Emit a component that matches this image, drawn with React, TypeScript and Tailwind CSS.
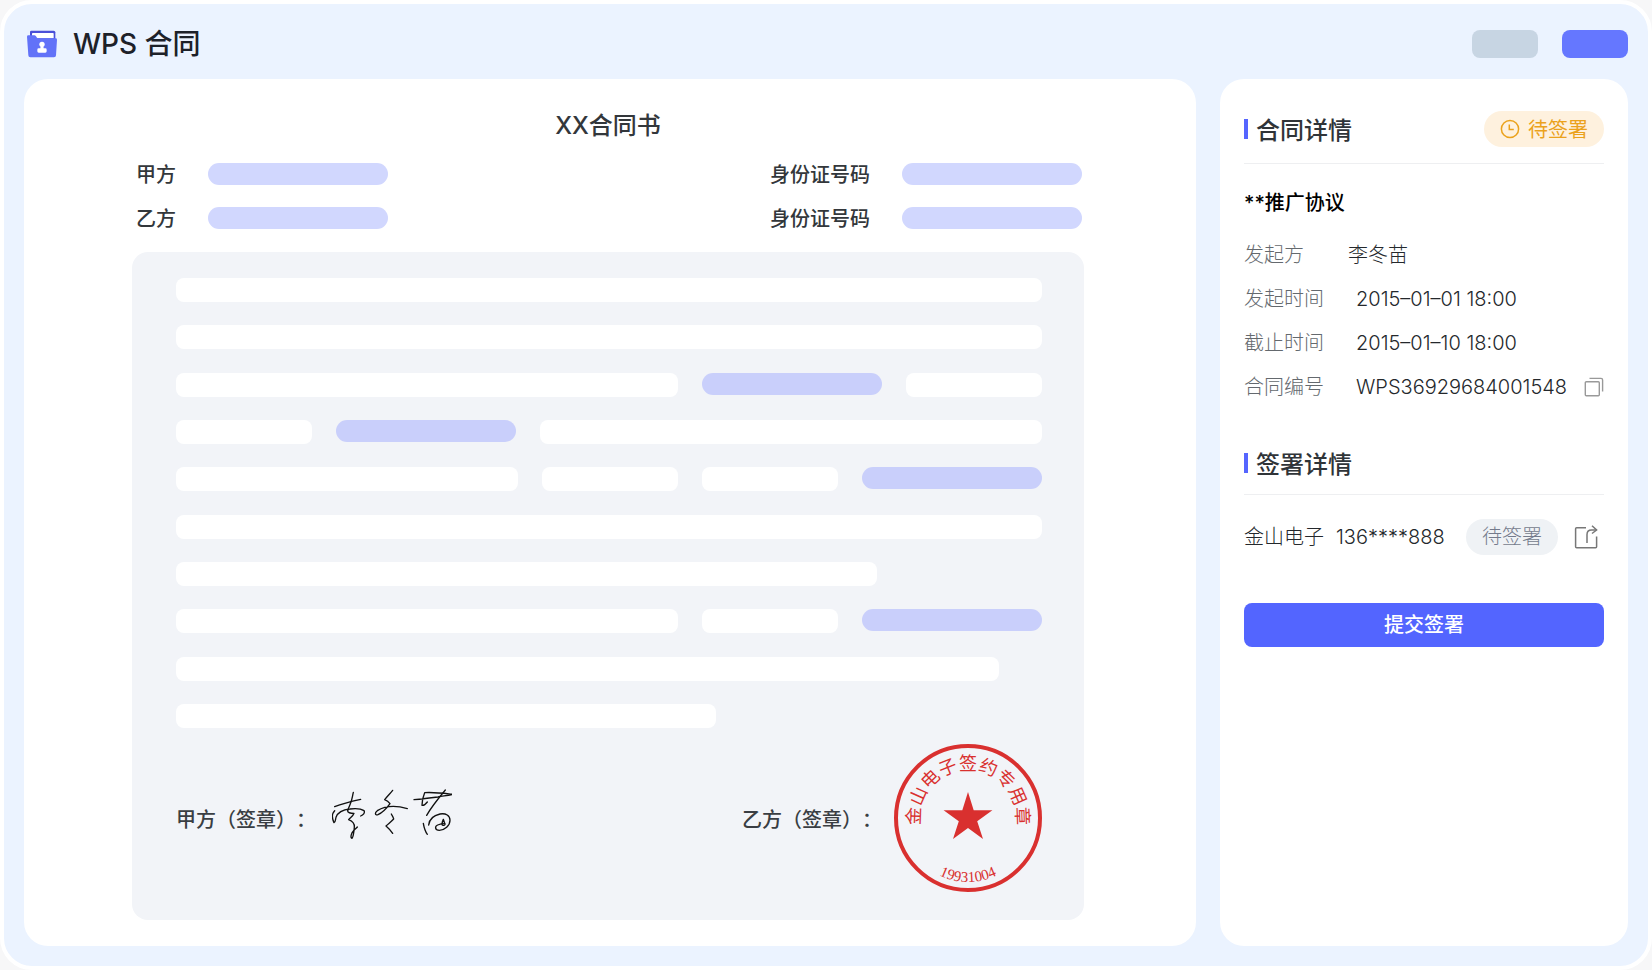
import clsx from "clsx";

interface Segment {
  kind: "text" | "field";
  // tailwind width / grow class
  size: string;
}

interface Detail {
  label: string;
  value: string;
  gap: string;
  copyable?: boolean;
}

const FIELD: Segment = { kind: "field", size: "w-[180px] shrink-0" };
const SHORT: Segment = { kind: "text", size: "w-[136px] shrink-0" };
const FILL: Segment = { kind: "text", size: "flex-1" };

const lines: Segment[][] = [
  [FILL],
  [FILL],
  [FILL, FIELD, SHORT],
  [SHORT, FIELD, FILL],
  [FILL, SHORT, SHORT, FIELD],
  [FILL],
  [{ kind: "text", size: "w-[81%]" }],
  [FILL, SHORT, FIELD],
  [{ kind: "text", size: "w-[95%]" }],
  [{ kind: "text", size: "w-[62.4%]" }],
];

const parties = ["甲方", "乙方"];

const details: Detail[] = [
  { label: "发起方", value: "李冬苗", gap: "gap-11" },
  { label: "发起时间", value: "2015–01–01 18:00", gap: "gap-8" },
  { label: "截止时间", value: "2015–01–10 18:00", gap: "gap-8" },
  {
    label: "合同编号",
    value: "WPS36929684001548",
    gap: "gap-8",
    copyable: true,
  },
];

const sealText = "金山电子签约专用章";

function FolderLogo() {
  return (
    <svg viewBox="81 85 90 90" className="size-[30px]" aria-hidden="true">
      <path d="M90 94q0-4 4-4h67q5 0 5 5v22H90z" fill="#4a50d8" />
      <path d="M96 99q0-2 2-2h61q2 0 2 2v14H96z" fill="#fff" />
      <path
        d="M81 108q0-4 4-4h18q3 0 5 3l3 4q2 2 4 2h52q4 0 4 4l-3 47q0 6-6 6H91q-6 0-6-6z"
        fill="#6272f8"
      />
      <circle cx="126" cy="131" r="8" fill="#fff" />
      <path
        d="M122 136h8l1 7h5q4 0 4 4v5q0 4-4 4h-20q-4 0-4-4v-5q0-4 4-4h5z"
        fill="#fff"
      />
    </svg>
  );
}

function ClockIcon() {
  return (
    <svg
      viewBox="0 0 20 20"
      className="size-5"
      fill="none"
      stroke="currentColor"
      strokeWidth="1.5"
      aria-hidden="true"
    >
      <circle cx="10" cy="10" r="8.6" />
      <path d="M9.3 5.5v5h4.5" />
    </svg>
  );
}

function CopyIcon() {
  return (
    <svg
      viewBox="0 0 20 20"
      className="size-5"
      fill="none"
      stroke="currentColor"
      strokeWidth="1.4"
      aria-hidden="true"
    >
      <rect x="1.3" y="4.7" width="14" height="14" rx="1" />
      <path d="M5.5 1.4H17q1.6 0 1.6 1.6v11.5" />
    </svg>
  );
}

function ShareIcon() {
  return (
    <svg
      viewBox="0 0 24 24"
      className="size-6"
      fill="none"
      stroke="currentColor"
      strokeWidth="1.5"
      aria-hidden="true"
    >
      <path d="M12 2.7H2.6q-1 0-1 1v18q0 1 1 1h19q1 0 1-1V11.500" />
      <path d="M13 18V9.500q0-4.500 4.500-4.500h5" />
      <path d="M18 .8l4.600 4.200-4.600 3.500" />
    </svg>
  );
}

function Signature() {
  return (
    <svg
      viewBox="96 84 360 180"
      className="h-[60px] w-[120px]"
      fill="none"
      stroke="#111"
      strokeWidth="4"
      strokeLinecap="round"
      strokeLinejoin="round"
      role="img"
      aria-label="李冬苗"
    >
      <path d="M160 97c-3 12-4 24-9 34-3 8-6 14-8 21" />
      <path d="M104 140c22-9 50-16 78-22" />
      <path d="M104 152c-9 9-8 23-2 36 5-2 4-9 6-16 5-14 20-23 42-25 16-2 33-1 42 5 4 7-3 13-10 16" />
      <path d="M143 152c-1 6 8 8 19 8-3 9-11 13-16 19 12 5 18 12 17 22-1 14-2 28-7 34-6-2-2-16 4-22 4-5 9-8 12-12" />
      <path d="M278 91c-8 10-17 19-24 28 7 3 12 7 16 12-10 14-22 27-36 33-10 3-10-6-2-12 18-11 46-19 90-6" />
      <path d="M274 162c3 6 6 10 7 15-7 8-16 14-23 21 8 7 15 14 20 22" />
      <path d="M342 119c26-2 50-5 72-8 16-3 30-5 44-8-26-3-56-7-84-5-6 14-8 26-8 38 6 2 12-5 16-10" />
      <path d="M436 90c-20 24-40 48-56 76" />
      <path d="M370 190c2 12 4 22 12 33" />
      <path d="M386 195c2-18 16-29 34-33 18-3 30 5 30 19 0 16-16 30-32 30-14 0-14-12-5-16 8-3 14-4 21-4" />
      <path d="M430 178c-3 6-4 12-4 16 4 3 8 3 9-1l-5-15" />
    </svg>
  );
}

function CompanySeal() {
  return (
    <svg
      viewBox="0 0 148 148"
      className="size-[148px]"
      fill="#d9302f"
      role="img"
      aria-label="金山电子签约专用章"
    >
      <circle
        cx="74"
        cy="74"
        r="72"
        fill="none"
        stroke="#d9302f"
        strokeWidth="4"
      />
      <path d="M74 48l5.700 18.200h18.700l-15.200 11 5.800 17.800-15-11-15 11 5.800-17.800-15.200-11h18.700z" />
      {sealText.split("").map((char, i) => (
        <text
          key={char}
          x="74"
          y="26"
          textAnchor="middle"
          fontSize="18"
          fontWeight="400"
          fontFamily="'Noto Sans CJK SC', serif"
          transform={`rotate(${(i - 4) * 22} 74 74)`}
        >
          {char}
        </text>
      ))}
      <path id="seal-arc" d="M8 72a66 66 0 0 0 132 0" fill="none" />
      <text
        fontSize="15"
        fontWeight="400"
        textAnchor="middle"
        fontFamily="'Liberation Serif', serif"
      >
        <textPath href="#seal-arc" startOffset="50%">
          19931004
        </textPath>
      </text>
    </svg>
  );
}

function SectionTitle({ children }: { children: string }) {
  return (
    <h2 className="flex items-center gap-2 text-2xl leading-8 font-medium text-[#303438]">
      <span className="h-5 w-1 bg-[#5565ff]" />
      <span className="pt-1">{children}</span>
    </h2>
  );
}

function ContractDocument() {
  return (
    <main className="flex min-w-0 flex-1 flex-col rounded-3xl bg-white pt-[31px] pr-[112px] pb-[26px] pl-[108px]">
      <h1 className="text-center text-2xl leading-8 font-medium text-[#33373b]">
        XX合同书
      </h1>

      <div className="mt-[21px] flex flex-col gap-[22px] pr-[2px] pl-1 text-xl leading-6 font-medium text-[#33373b]">
        {parties.map((party) => (
          <div key={party} className="flex h-[22px] justify-between">
            <div className="flex gap-8">
              <span>{party}</span>
              <span className="h-[22px] w-[180px] rounded-full bg-[#d1d7fe]" />
            </div>
            <div className="flex gap-8">
              <span>身份证号码</span>
              <span className="h-[22px] w-[180px] rounded-full bg-[#d1d7fe]" />
            </div>
          </div>
        ))}
      </div>

      <section className="mt-[23px] flex flex-1 flex-col rounded-2xl bg-[#f2f4f8] pt-[26px] pr-[42px] pb-7 pl-11">
        <div className="flex flex-1 flex-col justify-between gap-3">
          {lines.map((segments, i) => (
            <div key={i} className="flex h-6 gap-6">
              {segments.map((segment, j) => (
                <span
                  key={j}
                  className={clsx(
                    segment.size,
                    segment.kind === "field"
                      ? "h-[22px] rounded-full bg-[#c9cffb]"
                      : "h-6 rounded-lg bg-white"
                  )}
                />
              ))}
            </div>
          ))}
        </div>

        {/* Signatures */}
        <div className="mt-4 flex items-center justify-between text-xl font-medium text-[#3a3e43] [text-spacing-trim:space-all]">
          <div className="flex items-center gap-4">
            <span className="pt-1">甲方（签章）：</span>
            <Signature />
          </div>
          <div className="flex items-center gap-3">
            <span className="pt-1">乙方（签章）：</span>
            <CompanySeal />
          </div>
        </div>
      </section>
    </main>
  );
}

function ContractSidebar() {
  return (
    <aside className="w-[408px] shrink-0 rounded-3xl bg-white px-6 pt-8 text-xl">
      <div className="flex items-center justify-between border-b border-[#eeeff1] pb-4">
        <SectionTitle>合同详情</SectionTitle>
        <span className="flex h-9 items-center gap-2 rounded-full bg-[#fef1de] px-4 leading-9 text-[#eba21c]">
          <ClockIcon />
          <span className="pt-0.5">待签署</span>
        </span>
      </div>

      <h3 className="mt-[23px] leading-8 font-medium text-black">
        **推广协议
      </h3>

      <dl className="mt-[22px] flex flex-col gap-4 leading-7 font-light">
        {details.map((detail) => (
          <div key={detail.label} className={clsx("flex", detail.gap)}>
            <dt className="text-[#64696e]">{detail.label}</dt>
            <dd className="flex flex-1 items-center justify-between text-[#24282c]">
              {detail.value}
              {detail.copyable && (
                <button type="button" aria-label="复制" className="text-[#999]">
                  <CopyIcon />
                </button>
              )}
            </dd>
          </div>
        ))}
      </dl>

      <div className="mt-11 border-b border-[#eeeff1] pb-[13px]">
        <SectionTitle>签署详情</SectionTitle>
      </div>

      <div className="mt-6 flex items-center font-light text-[#24282c]">
        <span>金山电子</span>
        <span className="ml-3">136****888</span>
        <span className="ml-auto h-9 rounded-full bg-[#eff2f5] px-4 leading-9 text-[#747b8c]">
          待签署
        </span>
        <button
          type="button"
          aria-label="分享"
          className="mr-1.5 ml-4 text-[#777]"
        >
          <ShareIcon />
        </button>
      </div>

      <button
        type="button"
        className="mt-12 h-11 w-full rounded-lg bg-[#5365ff] font-medium text-white"
      >
        提交签署
      </button>
    </aside>
  );
}

export default function App() {
  return (
    <div className="flex min-h-screen bg-[#f7f7f8] font-[Inter,'Noto_Sans_CJK_SC',sans-serif]">
      <div className="flex flex-1 flex-col rounded-[32px] border-4 border-white bg-[#ebf3ff] px-5 pb-5">
        <header className="flex items-center justify-between pt-6 pb-[19px] pl-[3px]">
          <div className="flex items-center gap-4">
            <FolderLogo />
            <span className="text-[28px] leading-8 font-medium text-[#1d2129]">
              WPS 合同
            </span>
          </div>
          <div className="flex gap-6">
            <button
              type="button"
              aria-label="取消"
              className="h-7 w-[66px] rounded-lg bg-[#c7d5e3]"
            />
            <button
              type="button"
              aria-label="确定"
              className="h-7 w-[66px] rounded-lg bg-[#6577ff]"
            />
          </div>
        </header>

        <div className="flex flex-1 gap-6">
          <ContractDocument />
          <ContractSidebar />
        </div>
      </div>
    </div>
  );
}
